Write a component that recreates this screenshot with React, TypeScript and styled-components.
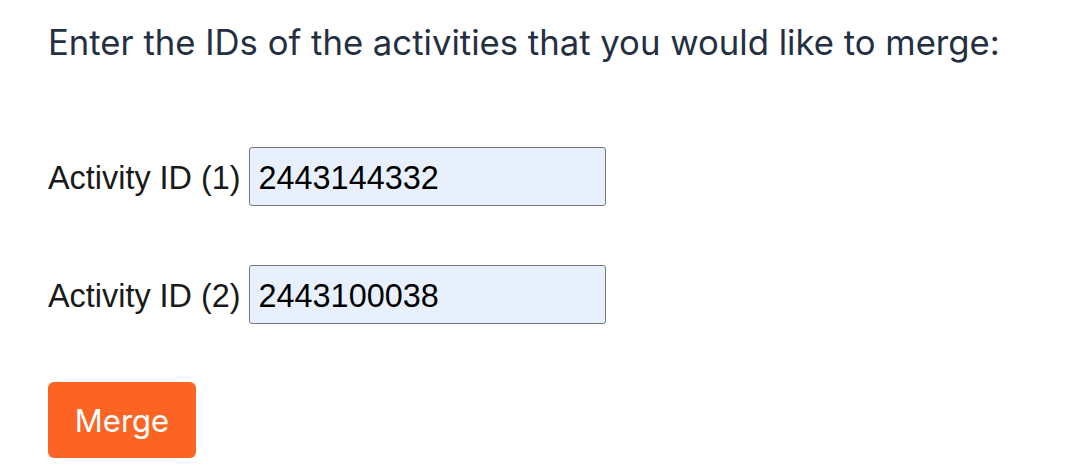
import React from 'react'
import styled, { createGlobalStyle } from 'styled-components'

const GlobalStyle = createGlobalStyle`
  body {
    margin: 0;
    background: #ffffff;
  }
`

const Page = styled.div`
  display: flex;
  flex-flow: column nowrap;
  padding: 20px 48px 0 48px;
`

const Heading = styled.h2`
  margin: 0 0 83px 0;
  font-family: Inter, 'Noto Sans', sans-serif;
  font-weight: 400;
  font-size: 34.7px;
  line-height: 44px;
  white-space: nowrap;
  color: #242f42;
`

const Row = styled.div`
  display: flex;
  flex-flow: row nowrap;
  align-items: center;
  gap: 8px;
  margin-bottom: 59px;
`

const Label = styled.label`
  padding-top: 4px;
  font-family: 'Liberation Sans', Arial, sans-serif;
  font-size: 32.4px;
  color: #1a1a1a;
`

const Input = styled.input`
  box-sizing: border-box;
  width: 357px;
  height: 59px;
  padding: 4px 8px 0 9px;
  border: 1px solid #767676;
  border-radius: 3px;
  background: #e8f0fe;
  font-family: 'Liberation Sans', Arial, sans-serif;
  font-size: 32.4px;
  color: #000000;
  outline: none;
`

const MergeButton = styled.button`
  align-self: flex-start;
  width: 148px;
  height: 76px;
  margin-top: -1px;
  border: none;
  border-radius: 6px;
  background: #fc6423;
  color: #ffffff;
  font-family: Inter, 'Noto Sans', sans-serif;
  font-size: 31px;
  cursor: pointer;
`

export default function App() {
  return (
    <>
      <GlobalStyle />
      <Page>
        <Heading>Enter the IDs of the activities that you would like to merge:</Heading>
        <Row>
          <Label htmlFor="activity1">Activity ID (1)</Label>
          <Input id="activity1" defaultValue="2443144332" />
        </Row>
        <Row>
          <Label htmlFor="activity2">Activity ID (2)</Label>
          <Input id="activity2" defaultValue="2443100038" />
        </Row>
        <MergeButton>Merge</MergeButton>
      </Page>
    </>
  )
}
